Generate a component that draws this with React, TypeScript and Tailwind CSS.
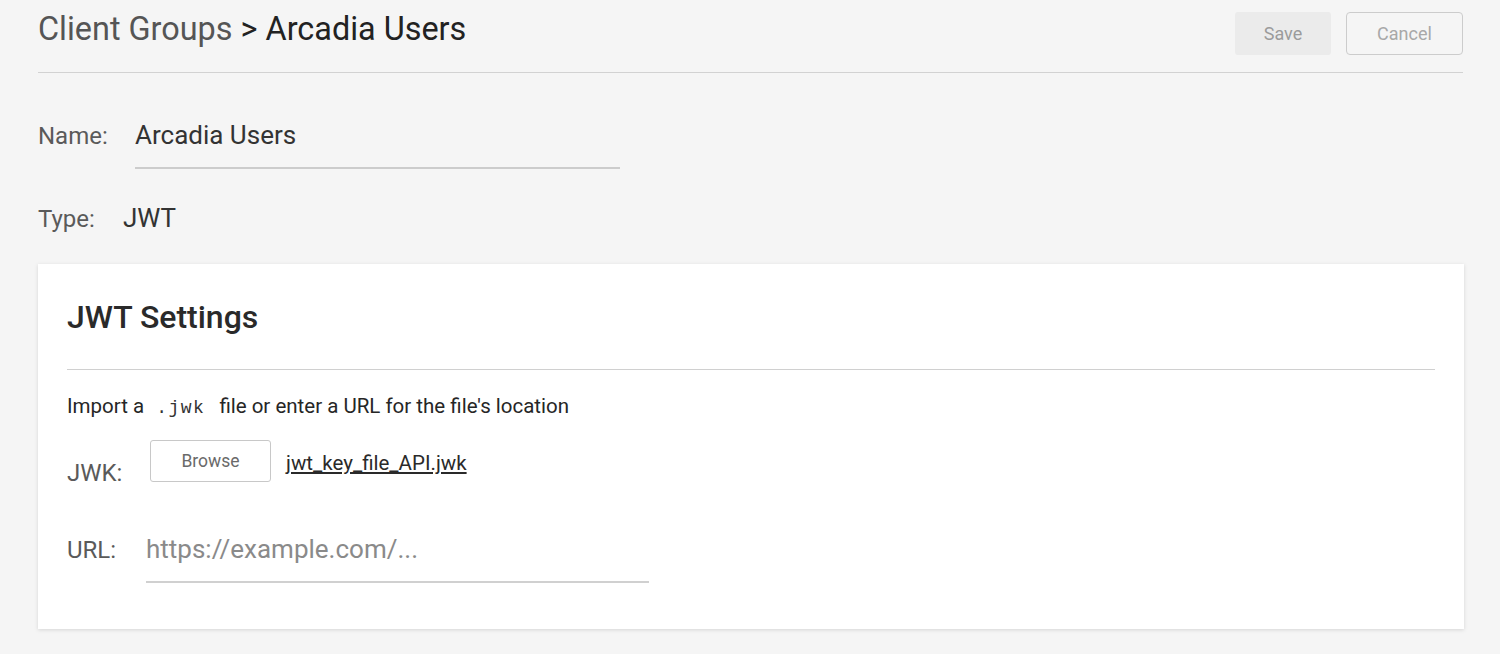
import React from 'react';

export default function App() {
  return (
    <div className="min-h-screen bg-[#f5f5f5] pl-[38px] pr-[36px] pb-6 font-['Roboto',sans-serif]">
      <div className="mr-px flex h-[73px] items-start justify-between border-b border-[#d2d2d2]">
        <h1 className="mt-[9px] text-[32.4px] leading-[40px] font-normal">
          <span className="text-[#555555]">Client Groups</span>
          <span className="text-[#222222]"> &gt; Arcadia Users</span>
        </h1>
        <div className="mt-[12px] flex gap-[15px]">
          <button className="h-[43px] w-[96px] rounded-[3px] bg-[#ebebeb] text-[18px] text-[#9b9b9b]">
            Save
          </button>
          <button className="h-[43px] w-[117px] rounded-[4px] border border-[#cccccc] text-[18px] text-[#a8a8a8]">
            Cancel
          </button>
        </div>
      </div>

      <div className="mt-[46px] flex items-baseline">
        <label className="w-[97px] text-[24px] leading-[28px] text-[#5a5a5a]">Name:</label>
        <input
          readOnly
          value="Arcadia Users"
          className="h-[50px] w-[485px] border-b-2 border-[#cccccc] bg-transparent pb-[16px] text-[26px] leading-[32px] text-[#333333] outline-none"
        />
      </div>

      <div className="mt-[33px] flex items-baseline">
        <span className="w-[85px] text-[24px] leading-[28px] text-[#5a5a5a]">Type:</span>
        <span className="text-[26px] leading-[32px] text-[#333333]">JWT</span>
      </div>

      <div className="mt-[30px] bg-white px-[29px] pt-[35px] pb-[46px] shadow-[0_1px_4px_rgba(0,0,0,0.13)]">
        <div className="border-b border-[#d0d0d0] pb-[34px]">
          <h2 className="text-[32px] leading-[36px] font-medium text-[#2a2a2a]">JWT Settings</h2>
        </div>

        <p className="mt-[24px] text-[20.5px] leading-[24px] text-[#262626]">
          Import a
          <code className="ml-[12px] mr-[14px] font-['Liberation_Mono',monospace] text-[18px] tracking-[1.5px] text-[#333333]">
            .jwk
          </code>
          file or enter a URL for the file's location
        </p>

        <div className="mt-[20px] flex items-start">
          <span className="mt-[19px] w-[83px] text-[24px] leading-[28px] text-[#5a5a5a]">JWK:</span>
          <button className="h-[42px] w-[121px] rounded-[3px] border border-[#c8c8c8] bg-white text-[17.5px] leading-[20px] text-[#6a6a6a]">
            Browse
          </button>
          <a className="mt-[11px] ml-[15px] text-[20.5px] leading-[24px] text-[#2a2a2a] underline underline-offset-2">
            jwt_key_file_API.jwk
          </a>
        </div>

        <div className="mt-[46px] flex items-baseline">
          <span className="w-[79px] text-[24px] leading-[28px] text-[#5a5a5a]">URL:</span>
          <input
            placeholder="https://example.com/..."
            className="h-[50px] w-[503px] border-b-2 border-[#d0d0d0] bg-transparent pb-[16px] text-[26px] leading-[32px] text-[#333333] outline-none placeholder:text-[#8a8a8a]"
          />
        </div>
      </div>
    </div>
  );
}
